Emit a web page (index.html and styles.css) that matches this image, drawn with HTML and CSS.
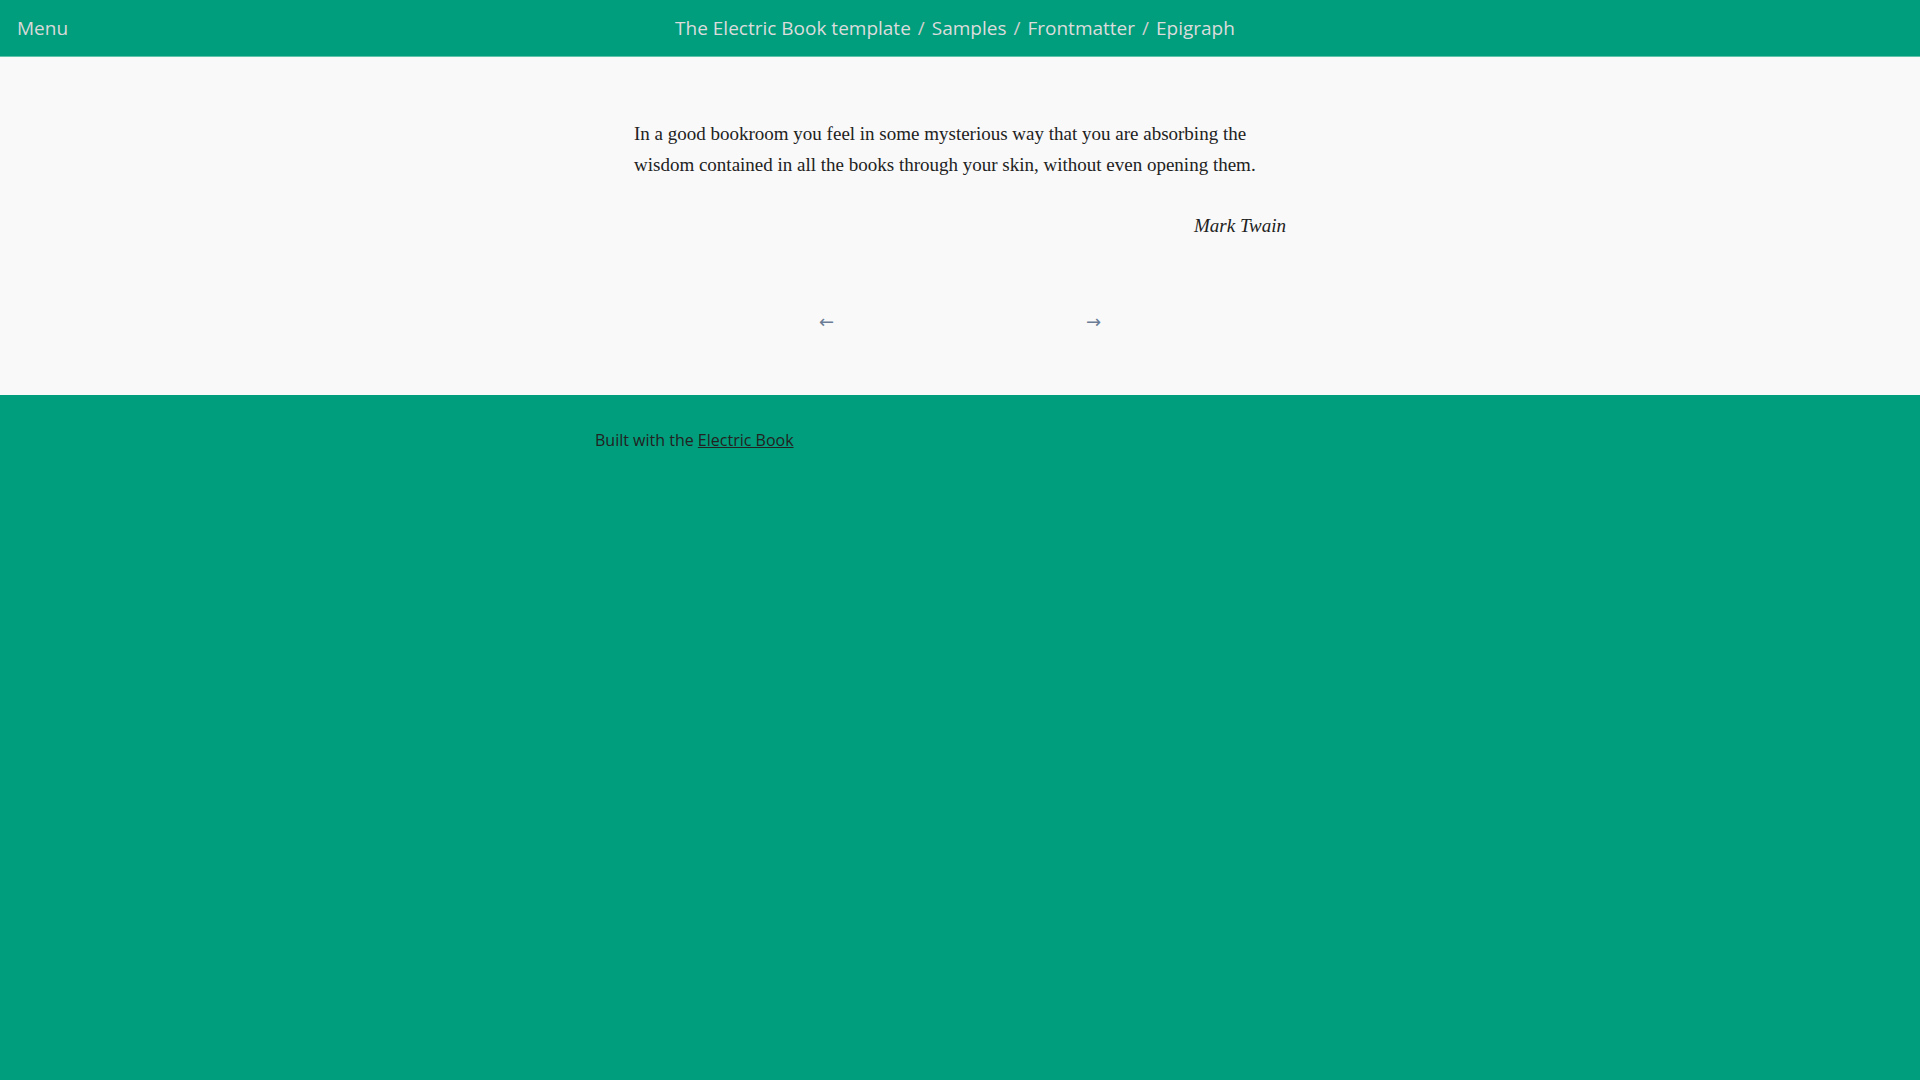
FILE: index.html
```html
<!DOCTYPE html>
<html lang="en">
<head>
<meta charset="utf-8">
<title>Epigraph | The Electric Book template</title>
<link rel="stylesheet" href="styles.css">
</head>
<body>
<header class="site-header">
  <div class="menu-col"><a class="menu-link" href="#">Menu</a></div>
  <nav class="breadcrumbs">
    <a href="#">The Electric Book template</a><span class="sep">/</span><a href="#">Samples</a><span class="sep">/</span><a href="#">Frontmatter</a><span class="sep">/</span><span class="current">Epigraph</span>
  </nav>
  <div class="spacer-col"></div>
</header>
<main class="page">
  <div class="content">
    <blockquote class="epigraph">
      <p class="epigraph-text">In a good bookroom you feel in some mysterious way that you are absorbing the wisdom contained in all the books through your skin, without even opening them.</p>
      <p class="epigraph-source">Mark Twain</p>
    </blockquote>
  </div>
  <nav class="page-nav">
    <a class="prev" href="#">←</a>
    <a class="next" href="#">→</a>
  </nav>
</main>
<footer class="site-footer">
  <p class="footer-text">Built with the <a href="#">Electric Book</a></p>
</footer>
</body>
</html>
```
FILE: styles.css
```css
html, body {
  margin: 0;
  padding: 0;
}
body {
  background: #009e7c;
  font-family: "Open Sans", "Noto Sans", sans-serif;
  min-height: 100vh;
}
.site-header {
  height: 56px;
  background: #009e7c;
  border-bottom: 1px solid #5fc2ab;
  display: grid;
  grid-template-columns: 1fr auto 1fr;
  align-items: center;
}
.menu-col {
  padding-left: 17px;
}
.menu-link {
  color: #d9d9d9;
  text-decoration: none;
  font-size: 19px;
}
.breadcrumbs {
  font-size: 19px;
  color: #d9d9d9;
  white-space: nowrap;
  padding-right: 10px;
}
.breadcrumbs a, .breadcrumbs .current {
  color: #dcdcdc;
  text-decoration: none;
}
.breadcrumbs .sep {
  margin: 0 7px;
  color: #cfcfcf;
}
.page {
  background: #f9f9f9;
  padding-top: 62px;
  height: 338px;
  box-sizing: border-box;
}
.content {
  width: 652px;
  margin: 0 auto;
}
.epigraph {
  margin: 0;
  font-family: "Liberation Serif", "Times New Roman", serif;
  font-size: 19px;
  line-height: 30.5px;
  color: #222;
}
.epigraph-text {
  margin: 0;
}
.epigraph-source {
  margin: 31px 0 0;
  text-align: right;
  font-style: italic;
}
.page-nav {
  width: 282px;
  margin: 70px auto 0;
  display: flex;
  justify-content: space-between;
  font-family: "DejaVu Sans", sans-serif;
  font-size: 18px;
  line-height: 20px;
}
.page-nav a {
  color: #6b7c96;
  text-decoration: none;
}
.site-footer {
  background: #009e7c;
  padding-top: 34px;
}
.footer-text {
  width: 730px;
  margin: 0 auto;
  font-size: 16px;
  color: #222;
}
.footer-text a {
  color: #222;
  text-decoration: underline;
}
```
